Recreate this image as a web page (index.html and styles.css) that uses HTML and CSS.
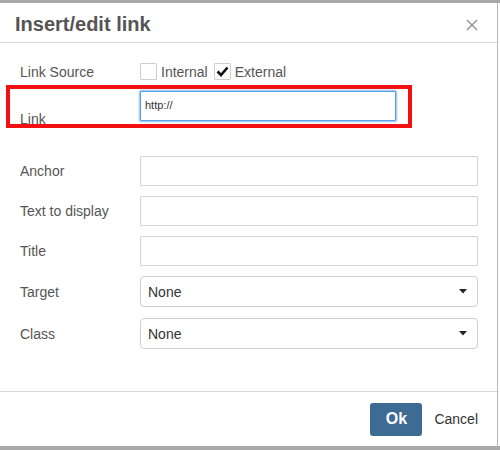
FILE: index.html
```html
<!DOCTYPE html>
<html>
<head>
<meta charset="utf-8">
<link rel="stylesheet" href="styles.css">
</head>
<body>
<div class="page">
  <div class="bar-top"></div>
  <div class="dialog">
    <div class="head">
      <div class="title">Insert/edit link</div>
      <svg class="close" width="12" height="12" viewBox="0 0 12 12"><path d="M1 1L11 11M11 1L1 11" stroke="#9a9a9a" stroke-width="1.6" fill="none"/></svg>
    </div>
    <div class="body">
      <div class="row row-source">
        <div class="label">Link Source</div>
        <div class="checks">
          <span class="cb"></span><span class="cb-text">Internal</span>
          <span class="cb cb-on"><svg width="13" height="11" viewBox="0 0 13 11"><path d="M1.5 5.5L5 9L11.5 1.5" stroke="#111" stroke-width="2.6" fill="none"/></svg></span><span class="cb-text">External</span>
        </div>
      </div>
      <div class="highlight">
        <div class="label label-link">Link</div>
        <input class="input input-focus" type="text" value="http://">
      </div>
      <div class="row row-first">
        <div class="label">Anchor</div>
        <input class="input input-wide" type="text">
      </div>
      <div class="row">
        <div class="label">Text to display</div>
        <input class="input input-wide" type="text">
      </div>
      <div class="row">
        <div class="label">Title</div>
        <input class="input input-wide" type="text">
      </div>
      <div class="row">
        <div class="label">Target</div>
        <div class="select"><span>None</span><svg width="8" height="5" viewBox="0 0 8 5"><path d="M0 0H8L4 4.5Z" fill="#222"/></svg></div>
      </div>
      <div class="row row-sel">
        <div class="label">Class</div>
        <div class="select"><span>None</span><svg width="8" height="5" viewBox="0 0 8 5"><path d="M0 0H8L4 4.5Z" fill="#222"/></svg></div>
      </div>
    </div>
    <div class="foot">
      <button class="btn-ok">Ok</button>
      <button class="btn-cancel">Cancel</button>
    </div>
  </div>
  <div class="bar-bottom"></div>
</div>
</body>
</html>
```

FILE: styles.css
```css
html, body {
  margin: 0;
  padding: 0;
  background: #ffffff;
}
.page {
  width: 500px;
  height: 450px;
  display: flex;
  flex-direction: column;
  font-family: "Liberation Sans", Arial, sans-serif;
}
.bar-top {
  height: 3px;
  background: #a9a9a9;
}
.bar-bottom {
  height: 4px;
  background: #a9a9a9;
}
.dialog {
  width: 497px;
  height: 443px;
  border-right: 1px solid #b8b8b8;
  background: #fff;
  display: flex;
  flex-direction: column;
}
.head {
  height: 35px;
  padding-top: 4px;
  padding-left: 15px;
  padding-right: 19px;
  border-bottom: 1px solid #d6d6d9;
  display: flex;
  align-items: center;
  justify-content: space-between;
}
.title {
  font-size: 20px;
  font-weight: bold;
  line-height: 35px;
  color: #555;
}
.close {
  display: block;
}
.body {
  flex: 1;
  padding: 20px 19px 0 20px;
  display: flex;
  flex-direction: column;
}
.row {
  display: flex;
  align-items: center;
  margin-top: 10px;
}
.row-source {
  margin-top: 0;
  height: 17px;
}
.row-first {
  margin-top: 28px;
}
.row-sel {
  margin-top: 11px;
}
.label {
  width: 120px;
  flex: none;
  font-size: 14px;
  color: #555;
}
.checks {
  display: flex;
  align-items: center;
  font-size: 14px;
  color: #555;
}
.cb {
  width: 15px;
  height: 15px;
  border: 1px solid #cfcfcf;
  border-radius: 1px;
  display: flex;
  align-items: center;
  justify-content: center;
}
.cb-text {
  margin-left: 4px;
  margin-right: 6px;
}
.highlight {
  margin-top: 5px;
  margin-left: -14px;
  width: 388px;
  height: 35px;
  border: 4px solid #f21010;
  padding-left: 10px;
  box-sizing: content-box;
  display: flex;
  align-items: flex-start;
}
.label-link {
  align-self: flex-end;
  line-height: 14px;
  margin-bottom: -2px;
}
.input {
  box-sizing: border-box;
  height: 30px;
  border: 1px solid #d4d4d4;
  border-radius: 1px;
  padding: 0 4px;
  font-family: "Liberation Sans", Arial, sans-serif;
  font-size: 14px;
  color: #333;
  background: #fff;
  outline: none;
  margin: 0;
}
.input-focus {
  width: 256px;
  margin-top: 2px;
  border: 1px solid #5d9fe6;
  box-shadow: 0 0 2px 1px rgba(90, 160, 235, 0.7);
  font-size: 11px;
  padding-left: 4px;
  padding-bottom: 2px;
}
.input-wide {
  width: 338px;
}
.select {
  box-sizing: border-box;
  width: 338px;
  height: 31px;
  border: 1px solid #cfcfcf;
  border-radius: 4px;
  padding: 0 10px 0 7px;
  display: flex;
  align-items: center;
  justify-content: space-between;
  font-size: 14px;
  color: #333;
}
.select svg {
  display: block;
}
.foot {
  height: 54px;
  border-top: 1px solid #d6d6d9;
  padding: 0 19px 0 0;
  display: flex;
  align-items: center;
  justify-content: flex-end;
  box-sizing: content-box;
}
.btn-ok {
  width: 52px;
  height: 33px;
  border: none;
  border-radius: 3px;
  background: #3e6b94;
  color: #fff;
  font-family: "Liberation Sans", Arial, sans-serif;
  font-size: 16px;
  font-weight: bold;
  padding: 0;
  margin: 0 12px 0 0;
}
.btn-cancel {
  border: none;
  background: none;
  padding: 0;
  margin: 0;
  font-family: "Liberation Sans", Arial, sans-serif;
  font-size: 14px;
  color: #333;
}
```
